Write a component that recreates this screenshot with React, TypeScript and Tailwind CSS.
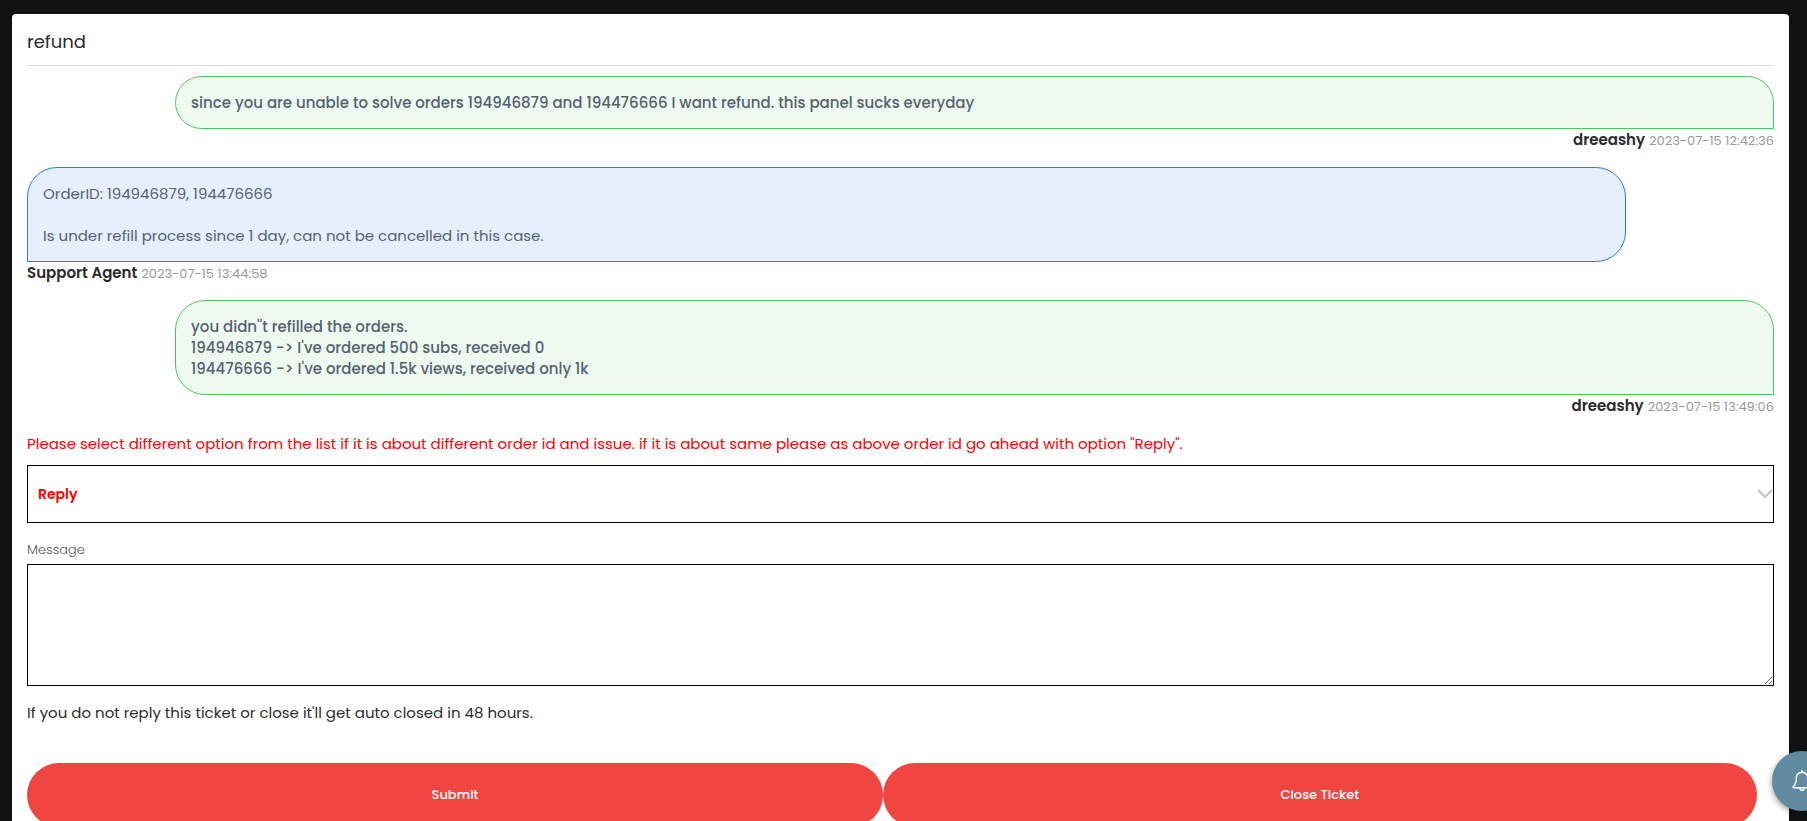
interface TicketMessage {
  author: string;
  date: string;
  lines: string[];
  own: boolean;
}

const messages: TicketMessage[] = [
  {
    author: 'dreeashy',
    date: '2023-07-15 12:42:36',
    lines: [
      'since you are unable to solve orders 194946879 and 194476666 I want refund. this panel sucks everyday',
    ],
    own: true,
  },
  {
    author: 'Support Agent',
    date: '2023-07-15 13:44:58',
    lines: [
      'OrderID: 194946879, 194476666',
      '',
      'Is under refill process since 1 day, can not be cancelled in this case.',
    ],
    own: false,
  },
  {
    author: 'dreeashy',
    date: '2023-07-15 13:49:06',
    lines: [
      "you didn''t refilled the orders.",
      "194946879 -> I've ordered 500 subs, received 0",
      "194476666 -> I've ordered 1.5k views, received only 1k",
    ],
    own: true,
  },
];

function Message({ message }: { message: TicketMessage }) {
  return (
    <div className={`w-11/12 px-[15px] mb-4 ${message.own ? 'ml-auto' : ''}`}>
      <div
        className={`border p-[15px] text-[15px] leading-[21px] text-[#556270] whitespace-pre-line ${
          message.own
            ? 'bg-[#eefaf0] border-[#4ac959] rounded-[30px] rounded-br-none font-medium'
            : 'bg-[#e5effe] border-[#2a7af3] rounded-[30px] rounded-bl-none'
        }`}
      >
        {message.lines.join('\n')}
      </div>
      <div className={`leading-[21px] ${message.own ? 'text-right' : ''}`}>
        <strong className="text-[15px] font-semibold">{message.author}</strong>{' '}
        <small className="text-[13px] text-[#999999]">{message.date}</small>
      </div>
    </div>
  );
}

export default function App() {
  return (
    <div className="min-h-screen bg-[#121212] pt-[14px] pl-3 pr-[18px] overflow-hidden font-['Poppins','Inter',sans-serif] text-[15px] text-[#2b2b2b]">
      <div className="bg-white rounded-t-[4px] pb-8">
        <div className="px-[15px]">
          <h1 className="pt-[15px] pb-[11px] mb-[10px] text-[18px] leading-[25px] border-b border-[#dddddd]">
            refund
          </h1>
        </div>

        {messages.map((message) => (
          <Message key={message.date} message={message} />
        ))}

        <form className="px-[15px]" onSubmit={(e) => e.preventDefault()}>
          <label htmlFor="option" className="block mb-[11px] leading-[21px] text-[#ff0000]">
            Please select different option from the list if it is about different order id and issue. if it is
            about same please as above order id go ahead with option "Reply".
          </label>
          <div className="relative mb-4">
            <select
              id="option"
              className="block w-full h-[58px] pl-[10px] pr-8 appearance-none border border-black bg-white text-[14px] font-semibold text-[#ff0000]"
            >
              <option>Reply</option>
            </select>
            <svg
              className="absolute right-0 top-1/2 -translate-y-1/2 pointer-events-none"
              width="18"
              height="12"
              viewBox="0 0 18 12"
              fill="none"
              stroke="#bfc3c6"
              strokeWidth="2"
            >
              <path d="M2 2l7 7 7-7" />
            </svg>
          </div>

          <label htmlFor="message" className="block mb-1 text-[13px] leading-[21px] font-light text-[#555555]">
            Message
          </label>
          <textarea id="message" className="block w-full h-[122px] p-[10px] border border-black bg-white" />

          <p className="mt-4 mb-10 leading-[21px]">
            If you do not reply this ticket or close it'll get auto closed in 48 hours.
          </p>

          <div className="flex text-[13px] font-medium text-white">
            <button type="submit" className="w-[49%] h-16 rounded-full bg-[#f04641]">
              Submit
            </button>
            <button type="button" className="w-1/2 h-16 rounded-full bg-[#f04641]">
              Close Ticket
            </button>
          </div>
        </form>
      </div>

      {/* Notification bell, partly off the right edge */}
      <button
        type="button"
        aria-label="Notifications"
        className="fixed bottom-[10px] -right-[25px] size-[60px] rounded-full bg-[#628ba1] flex items-center justify-center shadow-[0_2px_6px_rgba(0,0,0,0.4)]"
      >
        <svg width="20" height="22" viewBox="0 0 20 22" fill="none" stroke="white" strokeWidth="1.4" strokeLinejoin="round">
          <path d="M10 2.2c-3.6 0-5.7 2.7-5.7 6.1 0 5-1.2 6.6-3.1 8.4-.4.5-.2 1.1.5 1.1h16.6c.7 0 .9-.6.5-1.1-1.9-1.8-3.1-3.4-3.1-8.4 0-3.4-2.1-6.1-5.7-6.1z" />
          <path d="M10 2.2V.5M7.9 18c0 3.2 4.2 3.2 4.2 0" strokeLinecap="round" />
        </svg>
      </button>
    </div>
  );
}
